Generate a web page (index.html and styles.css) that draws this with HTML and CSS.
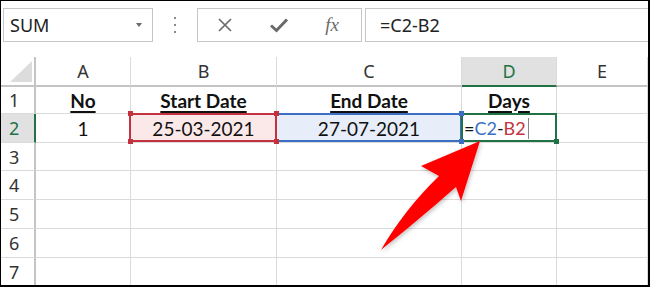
FILE: index.html
```html
<!DOCTYPE html>
<html lang="en">
<head>
  <meta charset="UTF-8">
  <title>Days between dates</title>
  <link rel="stylesheet" href="styles.css">
</head>
<body>
  <div class="window">
    <div class="toolbar">
      <div class="namebox"><span>SUM</span><span class="caret"></span></div>
      <div class="dots"><i></i><i></i><i></i></div>
      <div class="fbtns">
        <svg width="16" height="16" viewBox="0 0 16 16"><path d="M2 2 L14 14 M14 2 L2 14" stroke="#6a6a6a" stroke-width="1.7" fill="none"/></svg>
        <svg width="20" height="16" viewBox="0 0 20 16"><path d="M2 8.5 L7.5 13.5 L18 2.5" stroke="#6a6a6a" stroke-width="3" fill="none"/></svg>
        <span class="fx">fx</span>
      </div>
      <div class="finput">=C2-B2</div>
    </div>

    <div class="sheet">
      <div class="corner"><span></span></div>
      <div class="colhead">A</div>
      <div class="colhead">B</div>
      <div class="colhead">C</div>
      <div class="colhead sel">D</div>
      <div class="colhead">E</div>

      <div class="rowhead">1</div>
      <div class="cell"><b>No</b></div>
      <div class="cell"><b>Start Date</b></div>
      <div class="cell"><b>End Date</b></div>
      <div class="cell"><b>Days</b></div>
      <div class="cell"></div>

      <div class="rowhead sel">2</div>
      <div class="cell">1</div>
      <div class="cell ref-red">25-03-2021<i class="h tl"></i><i class="h tr"></i><i class="h bl"></i><i class="h br"></i></div>
      <div class="cell ref-blue">27-07-2021<i class="h tr"></i><i class="h br"></i></div>
      <div class="cell active">=<span class="c-blue">C2</span>-<span class="c-red">B2</span><span class="cursor"></span><i class="h br"></i></div>
      <div class="cell"></div>

      <div class="rowhead">3</div><div class="cell"></div><div class="cell"></div><div class="cell"></div><div class="cell"></div><div class="cell"></div>
      <div class="rowhead">4</div><div class="cell"></div><div class="cell"></div><div class="cell"></div><div class="cell"></div><div class="cell"></div>
      <div class="rowhead">5</div><div class="cell"></div><div class="cell"></div><div class="cell"></div><div class="cell"></div><div class="cell"></div>
      <div class="rowhead">6</div><div class="cell"></div><div class="cell"></div><div class="cell"></div><div class="cell"></div><div class="cell"></div>
      <div class="rowhead">7</div><div class="cell"></div><div class="cell"></div><div class="cell"></div><div class="cell"></div><div class="cell"></div>
    </div>

    <svg class="arrow" width="650" height="287" viewBox="0 0 650 287">
      <defs>
        <filter id="sh" x="-20%" y="-20%" width="140%" height="140%">
          <feDropShadow dx="1" dy="2" stdDeviation="2" flood-color="#000" flood-opacity="0.25"/>
        </filter>
      </defs>
      <path d="M480 141 L461 201 L456 187 C430 210 402 233 381 250 C396 224 416 198 439 176 L421 166 Z" fill="#ff0000" filter="url(#sh)"/>
    </svg>
  </div>
</body>
</html>
```

FILE: styles.css
```css
body { margin: 0; background: #fff; }
.window { position: relative; width: 650px; height: 287px; box-sizing: border-box; border: solid #000; border-width: 1px 2px 2px 1px; overflow: hidden; background: #fff; font-family: "Noto Sans", "Open Sans", sans-serif; }

.toolbar { display: flex; align-items: flex-start; height: 56px; padding-top: 7px; box-sizing: border-box; }
.namebox { display: flex; align-items: center; justify-content: space-between; margin-left: 2px; width: 150px; height: 34px; box-sizing: border-box; border: 1px solid #c6c6c6; padding: 0 10px 0 6px; font-size: 18px; color: #222; }
.caret { width: 0; height: 0; border-left: 3px solid transparent; border-right: 3px solid transparent; border-top: 4px solid #6a6a6a; }
.dots { width: 44px; height: 34px; display: flex; flex-direction: column; align-items: center; justify-content: center; gap: 5px; }
.dots i { width: 2px; height: 2px; background: #8a8a8a; }
.fbtns { display: flex; align-items: center; justify-content: space-between; width: 165px; height: 34px; box-sizing: border-box; border: 1px solid #c6c6c6; padding: 0 22px 0 19px; }
.fx { font-family: "Liberation Serif", serif; font-style: italic; font-size: 19px; color: #6a6a6a; }
.finput { flex: 1; margin-left: 3px; height: 34px; box-sizing: border-box; border: 1px solid #c6c6c6; border-right: none; padding-left: 14px; display: flex; align-items: center; font-size: 18px; color: #222; }

.sheet { display: grid; grid-template-columns: 35px 95px 146px 185px 95px 1fr; grid-template-rows: 30px 27px 29px 28px 29px 29px 29px 28px; }
.corner { border-right: 2px solid #c4c4c4; border-bottom: 2px solid #c4c4c4; position: relative; }
.corner span { position: absolute; right: 2px; bottom: 3px; width: 0; height: 0; border-left: 22px solid transparent; border-bottom: 21px solid #dcdcdc; }
.colhead { border-right: 1px solid #dadada; border-bottom: 2px solid #c4c4c4; display: flex; align-items: center; justify-content: center; font-size: 18px; color: #333; }
.colhead.sel { background: #e1e1e1; color: #217346; border-bottom-color: #217346; }
.rowhead { border-right: 2px solid #c4c4c4; border-bottom: 1px solid #dadada; display: flex; align-items: center; padding-left: 8px; font-size: 18px; color: #333; }
.rowhead.sel { background: #e1e1e1; color: #217346; border-right-color: #217346; }

.cell { position: relative; border-right: 1px solid #dadada; border-bottom: 1px solid #dadada; display: flex; align-items: center; justify-content: center; font-family: Lato, "Liberation Sans", sans-serif; font-size: 19px; color: #111; }
.cell b { font-size: 19px; text-decoration: underline; text-decoration-thickness: 2px; text-underline-offset: 3px; }

.ref-red { background: #fbe9ea; }
.ref-red::after { content: ""; position: absolute; top: -1px; left: -2px; right: -1px; bottom: 0; border: 2px solid #c4313f; }
.ref-red .h { background: #c4313f; }
.ref-blue { background: #e7eefa; }
.ref-blue::after { content: ""; position: absolute; top: -1px; left: 0; right: -1px; bottom: 0; border: 2px solid #3a6fc4; border-left: none; }
.ref-blue .h { background: #3a6fc4; }
.active { justify-content: flex-start; padding-left: 2px; font-size: 18px; }
.active::after { content: ""; position: absolute; top: -1px; left: -1px; right: -1px; bottom: 0; border: 2px solid #217346; }
.active .h { background: #217346; }
.c-blue { color: #3a6fc4; }
.c-red { color: #c4313f; }
.cursor { width: 1px; height: 21px; background: #888; margin-left: 2px; }

.h { position: absolute; width: 5px; height: 5px; z-index: 2; }
.h.tl { top: -3px; left: -3px; }
.h.tr { top: -3px; right: -3px; }
.h.bl { bottom: -2px; left: -3px; }
.h.br { bottom: -2px; right: -3px; }

.arrow { position: absolute; left: -1px; top: -1px; pointer-events: none; }
```
